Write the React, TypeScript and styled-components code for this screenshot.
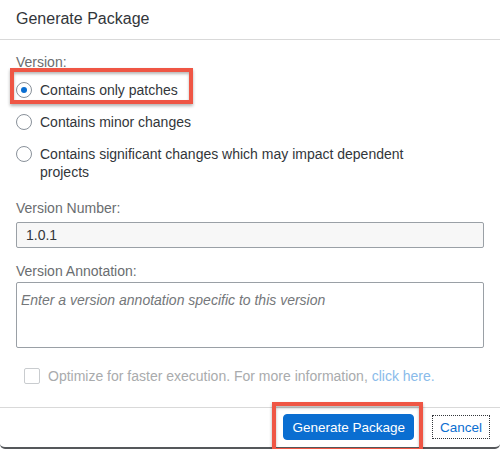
import React from "react";
import styled, { createGlobalStyle } from "styled-components";

const GlobalStyle = createGlobalStyle`
  html, body { margin: 0; padding: 0; background: #ffffff; }
  body { font-family: "Liberation Sans", Arial, sans-serif; overflow: hidden; }
  * { box-sizing: border-box; }
`;

const Dialog = styled.div`
  position: relative;
  width: 500px;
  height: 449px;
  display: flex;
  flex-direction: column;
  background: #ffffff;
  border-bottom: 2px solid #55585b;
  border-radius: 3px 3px 5px 5px;
`;

const Header = styled.header`
  height: 40px;
  flex: none;
  display: flex;
  align-items: center;
  padding: 0 16px 1px;
  border-bottom: 1px solid #d9d9d9;
  font-size: 16px;
  color: #32363a;
`;

const Content = styled.div`
  flex: 1;
  display: flex;
  flex-direction: column;
  padding: 13px 16px 0;
`;

const Label = styled.div<{ $top?: number }>`
  font-size: 14px;
  line-height: 18px;
  color: #6a6d70;
  margin-top: ${(p) => p.$top ?? 0}px;
`;

const RadioGroup = styled.div`
  display: flex;
  flex-direction: column;
  align-items: flex-start;
  margin-top: 3px;
`;

const RadioRow = styled.div<{ $highlight?: boolean }>`
  position: relative;
  display: flex;
  align-items: flex-start;
  gap: 8px;
  padding: 7px 0;
  font-size: 14px;
  line-height: 18px;
  color: #32363a;

  ${(p) =>
    p.$highlight &&
    `
    &::after {
      content: "";
      position: absolute;
      top: -6px;
      left: -6px;
      right: -15px;
      bottom: 2px;
      border: 4px solid #ef5645;
      box-shadow: inset 0 2px 3px rgba(0, 0, 0, 0.28), 0 2px 3px rgba(0, 0, 0, 0.3);
      pointer-events: none;
    }
  `}
`;

const RadioText = styled.span`
  max-width: 380px;
`;

const RadioCircle = styled.span<{ $checked?: boolean }>`
  flex: none;
  width: 16px;
  height: 16px;
  margin-top: 1px;
  border-radius: 50%;
  border: 1px solid #89919a;
  background: #ffffff;
  display: flex;
  align-items: center;
  justify-content: center;

  &::before {
    content: "";
    width: 6px;
    height: 6px;
    border-radius: 50%;
    background: ${(p) => (p.$checked ? "#0a6ed1" : "transparent")};
  }
`;

const TextInput = styled.input`
  margin-top: 5px;
  height: 26px;
  width: 100%;
  border: 1px solid #9aa0a6;
  border-radius: 2px;
  background: #f7f7f7;
  padding: 0 9px;
  font-family: inherit;
  font-size: 14px;
  color: #32363a;
  outline: none;
`;

const TextArea = styled.textarea`
  margin-top: 2px;
  height: 66px;
  width: 100%;
  resize: none;
  border: 1px solid #9aa0a6;
  border-radius: 2px;
  background: #ffffff;
  padding: 8px 4px;
  font-family: inherit;
  font-size: 14px;
  line-height: 18px;
  color: #32363a;
  outline: none;

  &::placeholder {
    color: #74777a;
    font-style: italic;
    opacity: 1;
  }
`;

const CheckRow = styled.div`
  margin-top: 19px;
  display: flex;
  align-items: center;
  gap: 8px;
  padding-left: 8px;
  font-size: 14px;
  line-height: 18px;
  color: #a9abad;
`;

const CheckBox = styled.span`
  flex: none;
  width: 16px;
  height: 16px;
  border: 1px solid #c9cccf;
  border-radius: 2px;
  background: #ffffff;
`;

const Link = styled.span`
  color: #8abbea;
`;

const Footer = styled.footer`
  flex: none;
  height: 40px;
  border-top: 1px solid #d9d9d9;
  display: flex;
  align-items: center;
  justify-content: flex-end;
  gap: 18px;
  padding: 0 10px 1px 0;
`;

const ButtonWrap = styled.div<{ $highlight?: boolean }>`
  position: relative;
  display: flex;

  ${(p) =>
    p.$highlight &&
    `
    &::after {
      content: "";
      position: absolute;
      top: -12px;
      left: -11px;
      right: -9px;
      bottom: -12px;
      border: 4px solid #ef5645;
      box-shadow: inset 0 2px 3px rgba(0, 0, 0, 0.28), 0 2px 3px rgba(0, 0, 0, 0.3);
      pointer-events: none;
    }
  `}
`;

const Button = styled.button<{ $primary?: boolean }>`
  font-family: inherit;
  font-size: 13.5px;
  cursor: pointer;
  ${(p) =>
    p.$primary
      ? `
    height: 26px;
    padding: 0 8px;
    background: #0a6ed1;
    color: #ffffff;
    border: 1px solid #0a6ed1;
    border-radius: 4px;
  `
      : `
    height: 24px;
    padding: 0 7px;
    background: #ffffff;
    color: #0a6ed1;
    border: 1px dotted #32363a;
    border-radius: 0;
  `}
`;

export default function App() {
  return (
    <>
      <GlobalStyle />
      <Dialog>
        <Header>Generate Package</Header>
        <Content>
          <Label>Version:</Label>
          <RadioGroup>
            <RadioRow $highlight>
              <RadioCircle $checked />
              <RadioText>Contains only patches</RadioText>
            </RadioRow>
            <RadioRow>
              <RadioCircle />
              <RadioText>Contains minor changes</RadioText>
            </RadioRow>
            <RadioRow>
              <RadioCircle />
              <RadioText>
                Contains significant changes which may impact dependent projects
              </RadioText>
            </RadioRow>
          </RadioGroup>
          <Label $top={11}>Version Number:</Label>
          <TextInput value="1.0.1" readOnly />
          <Label $top={14}>Version Annotation:</Label>
          <TextArea placeholder="Enter a version annotation specific to this version" />
          <CheckRow>
            <CheckBox />
            <span>
              Optimize for faster execution. For more information, <Link>click here.</Link>
            </span>
          </CheckRow>
        </Content>
        <Footer>
          <ButtonWrap $highlight>
            <Button $primary>Generate Package</Button>
          </ButtonWrap>
          <ButtonWrap>
            <Button>Cancel</Button>
          </ButtonWrap>
        </Footer>
      </Dialog>
    </>
  );
}
